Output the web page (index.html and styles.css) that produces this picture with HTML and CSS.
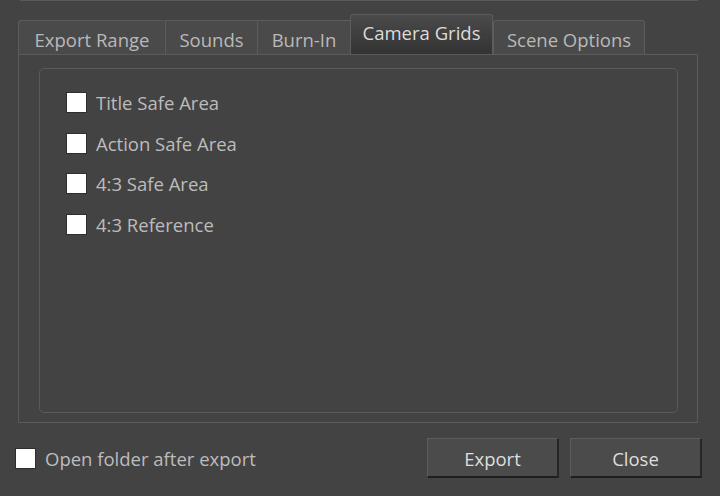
FILE: index.html
```html
<!DOCTYPE html>
<html lang="en">
<head>
    <meta charset="UTF-8">
    <title>Export Options</title>
    <link rel="stylesheet" href="styles.css">
</head>
<body>
    <div class="topline"></div>
    <div class="tabs">
        <div class="tab tab_range">Export Range</div>
        <div class="tab tab_sounds">Sounds</div>
        <div class="tab tab_burn">Burn-In</div>
        <div class="tab tab_grids active">Camera Grids</div>
        <div class="tab tab_scene">Scene Options</div>
    </div>
    <div class="panel">
        <div class="group">
            <label class="check"><span class="box"></span>Title Safe Area</label>
            <label class="check"><span class="box"></span>Action Safe Area</label>
            <label class="check"><span class="box"></span>4:3 Safe Area</label>
            <label class="check"><span class="box"></span>4:3 Reference</label>
        </div>
    </div>
    <div class="footer">
        <label class="check open_folder"><span class="box"></span>Open folder after export</label>
        <div class="buttons">
            <button class="btn">Export</button>
            <button class="btn">Close</button>
        </div>
    </div>
</body>
</html>
```

FILE: styles.css
```css
body {
    margin: 0;
    width: 720px;
    height: 496px;
    overflow: hidden;
    background: #434343;
    font-family: "Open Sans", "Noto Sans", sans-serif;
    font-size: 18.5px;
    color: #bcbcbc;
}

.topline {
    height: 1px;
    margin: 0 22px 0 20px;
    background: #5a5a5a;
}

.tabs {
    display: flex;
    align-items: flex-end;
    height: 53px;
    margin-left: 18px;
}

.tab {
    box-sizing: border-box;
    height: 34px;
    display: flex;
    align-items: center;
    justify-content: center;
    background: #4a4a4a;
    border: 1px solid #5c5c5c;
    border-bottom: none;
    border-right: none;
    border-radius: 3px 3px 0 0;
    color: #b9b9b9;
    font-size: 18.5px;
    padding-top: 3px;
}

.tab_range { width: 147px; }
.tab_sounds { width: 92px; border-radius: 0; }
.tab_burn { width: 93px; border-radius: 0; }
.tab_grids { width: 143px; }
.tab_scene { width: 152px; border-right: 1px solid #5c5c5c; }

.tab.active {
    height: 40px;
    padding-top: 0;
    padding-bottom: 4px;
    background: linear-gradient(#4a4a4a, #333333);
    border-right: 1px solid #5c5c5c;
    color: #dcdcdc;
}

.panel {
    box-sizing: border-box;
    width: 680px;
    height: 369px;
    margin-left: 18px;
    padding: 13px 19px 9px 20px;
    border: 1px solid #5a5a5a;
}

.group {
    box-sizing: border-box;
    height: 100%;
    border: 1px solid #5a5a5a;
    border-radius: 5px;
    padding: 23px 26px;
    display: flex;
    flex-direction: column;
    gap: 19.5px;
}

.check {
    display: flex;
    align-items: center;
    gap: 9px;
    height: 21px;
    white-space: nowrap;
}

.box {
    box-sizing: border-box;
    width: 21px;
    height: 21px;
    background: #ffffff;
    border: 1px solid #2e2e2e;
}

.footer {
    display: flex;
    align-items: center;
    justify-content: space-between;
    margin: 15px 18px 0 15px;
}

.buttons {
    display: flex;
    gap: 11px;
}

.btn {
    box-sizing: border-box;
    width: 132px;
    height: 40px;
    background: #4b4b4b;
    border: 1px solid #5c5c5c;
    border-bottom: 2px solid #1e1e1e;
    border-right: 2px solid #262626;
    color: #dedede;
    font-family: inherit;
    font-size: 18.5px;
    padding: 2px 0 0;
}
```
